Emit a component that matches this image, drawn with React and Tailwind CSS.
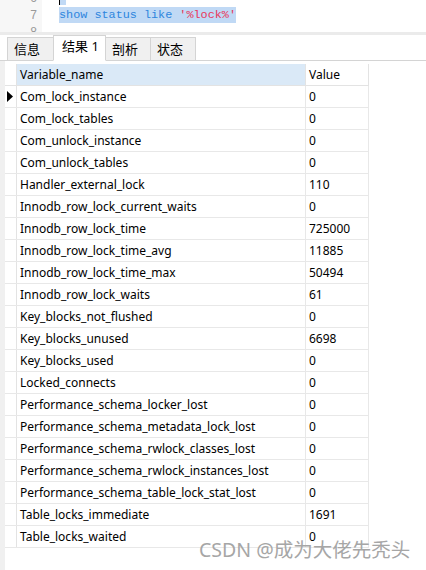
const rows = [
  ['Com_lock_instance', '0'],
  ['Com_lock_tables', '0'],
  ['Com_unlock_instance', '0'],
  ['Com_unlock_tables', '0'],
  ['Handler_external_lock', '110'],
  ['Innodb_row_lock_current_waits', '0'],
  ['Innodb_row_lock_time', '725000'],
  ['Innodb_row_lock_time_avg', '11885'],
  ['Innodb_row_lock_time_max', '50494'],
  ['Innodb_row_lock_waits', '61'],
  ['Key_blocks_not_flushed', '0'],
  ['Key_blocks_unused', '6698'],
  ['Key_blocks_used', '0'],
  ['Locked_connects', '0'],
  ['Performance_schema_locker_lost', '0'],
  ['Performance_schema_metadata_lock_lost', '0'],
  ['Performance_schema_rwlock_classes_lost', '0'],
  ['Performance_schema_rwlock_instances_lost', '0'],
  ['Performance_schema_table_lock_stat_lost', '0'],
  ['Table_locks_immediate', '1691'],
  ['Table_locks_waited', '0'],
];

const tabs = [
  { name: '信息', w: 'w-[47px]' },
  { name: '结果 1', w: 'w-[53px]' },
  { name: '剖析', w: 'w-[46px]' },
  { name: '状态', w: 'w-[46px]' },
];

export default function App() {
  return (
    <div className="relative w-[426px] h-[570px] overflow-hidden bg-white text-[12px] text-black font-['Noto_Sans','Noto_Sans_CJK_SC',sans-serif]">
      {/* editor */}
      <div className="flex h-[32px] overflow-hidden">
        <div className="w-[42px] shrink-0 bg-[#f7f7f7] flex flex-col items-end pr-[5px] -mt-[10px] text-[12px] leading-[17px] text-[#9a9a9a] font-['Liberation_Sans',sans-serif]">
          <span>6</span>
          <span>7</span>
          <span>8</span>
        </div>
        <div className="flex-1 pl-[17px] -mt-[10px] leading-[17px] text-[11.8px] font-['Liberation_Mono',monospace]">
          <div className="h-[17px] relative">
            <span className="absolute left-0 top-[2px] w-[7px] h-[13px] bg-[#c0d9f5]" />
            <span className="absolute left-0 top-[5px] w-[1px] h-[10px] bg-black" />
          </div>
          <div className="h-[17px]">
            <span className="bg-[#c0d9f5] py-[1px]">
              <span className="text-[#2e86de]">show status like </span>
              <span className="text-[#e8365a]">'%lock%'</span>
            </span>
          </div>
        </div>
      </div>

      {/* splitter */}
      <div className="h-[3px] bg-[#ebebeb]" />

      {/* tabs */}
      <div className="flex items-end h-[26px] pl-[7px] border-b border-[#d4d4d4] text-[13px]">
        {tabs.map((t, i) => (
          <div
            key={t.name}
            className={
              i === 1
                ? `${t.w} h-[26px] -mb-px -ml-px pl-[8px] pb-[3px] flex items-center bg-white border border-[#d4d4d4] border-b-white`
                : `${t.w} h-[23px] pl-[6px] pt-[1px] flex items-center bg-[#f0f0f0] border border-[#d4d4d4] border-b-0 ${i === 0 ? '' : '-ml-px'}`
            }
          >
            {t.name}
          </div>
        ))}
      </div>

      {/* grid */}
      <div className="flex h-full">
        <div className="w-[5px] shrink-0 bg-[#f0f0f0]" />
        <div className="pt-[3px]">
          <div className="flex h-[22px] bg-[#dae9f7] border-b border-[#e3e3e3]">
            <div className="w-[12px] border-r border-[#e3e3e3] bg-white" />
            <div className="w-[289px] border-r border-[#e3e3e3] pl-[3px] pt-[1px] flex items-center">Variable_name</div>
            <div className="w-[63px] border-r border-[#e3e3e3] pl-[3px] pt-[1px] flex items-center bg-white">Value</div>
          </div>
          {rows.map(([name, value], i) => (
            <div key={name} className="flex h-[22px] border-b border-[#e8e8e8]">
              <div className="w-[12px] border-r border-[#e3e3e3] flex items-center">
                {i === 0 && (
                  <svg width="7" height="11" viewBox="0 0 7 11" className="ml-[2px]">
                    <path d="M0 0 L6 5.5 L0 11 Z" fill="#000" />
                  </svg>
                )}
              </div>
              <div className="w-[289px] border-r border-[#e8e8e8] pl-[3px] pt-[1px] flex items-center">{name}</div>
              <div className="w-[63px] border-r border-[#e8e8e8] pl-[3px] pt-[1px] flex items-center">{value}</div>
            </div>
          ))}
        </div>
      </div>

      {/* watermark */}
      <div className="absolute left-[199px] top-[537px] text-[19.5px] text-[#a6a6a6] leading-[26px]">
        CSDN @成为大佬先秃头
      </div>
    </div>
  );
}
